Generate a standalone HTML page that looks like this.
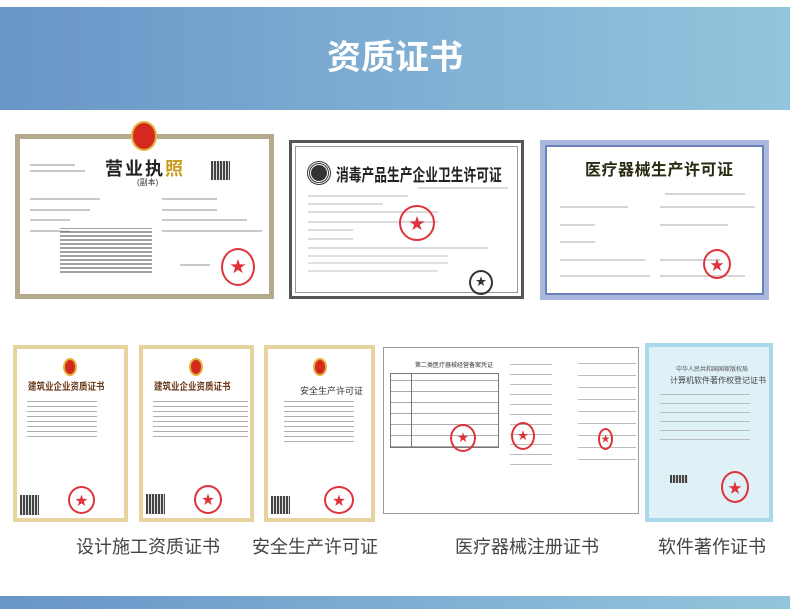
<!DOCTYPE html>
<html><head><meta charset="utf-8"><style>
*{margin:0;padding:0;box-sizing:border-box}
body{width:790px;height:609px;background:#fff;position:relative;overflow:hidden;font-family:"Liberation Sans","Noto Sans CJK SC",sans-serif}
.a{position:absolute}
.band{position:absolute;left:0;width:790px;background:linear-gradient(90deg,#6a95c8,#93c6dd)}
.t{position:absolute;font-size:18px;color:#444;top:533px;white-space:nowrap;font-family:"Noto Sans CJK SC",sans-serif}
.ln{position:absolute;height:2px;background:#888;opacity:.45}
.st{position:absolute;border-radius:50%;border:2px solid #e0323a;color:#e0323a;text-align:center;font-size:11px;line-height:1}
.qr{position:absolute;background:repeating-linear-gradient(90deg,#444 0 2px,#ddd 2px 3px)}
.em{position:absolute;border-radius:50%;background:#d42a1e;border:2px solid #e3b23c}
.h{position:absolute;font-weight:bold;white-space:nowrap;font-family:"Noto Sans CJK SC",sans-serif}
.tx{position:absolute;background:repeating-linear-gradient(0deg,#999 0 1px,#fff 1px 5px);opacity:.8}
</style></head><body>
<div class="band" style="top:7px;height:103px"></div>
<div class="a" style="top:30px;left:0;width:790px;text-align:center;font-size:34px;color:#fff;font-weight:bold;font-family:'Noto Sans CJK SC',sans-serif">资质证书</div>

<!-- cert1 -->
<div class="a" style="left:15px;top:134px;width:259px;height:165px;border:5px solid #b5a98c;background:#fff"></div>
<div class="em" style="left:131px;top:121px;width:26px;height:30px"></div>
<div class="h" style="left:105px;top:155px;font-size:18px;color:#222;letter-spacing:2px">营业执<span style="color:#c89a1e">照</span></div>
<div class="a" style="left:137px;top:177px;font-size:8px;color:#333">(副本)</div>
<div class="qr" style="left:211px;top:161px;width:19px;height:19px"></div>
<div class="ln" style="left:30px;top:164px;width:45px"></div>
<div class="ln" style="left:30px;top:170px;width:55px"></div>
<div class="ln" style="left:30px;top:198px;width:70px"></div>
<div class="ln" style="left:30px;top:209px;width:60px"></div>
<div class="ln" style="left:30px;top:219px;width:40px"></div>
<div class="ln" style="left:30px;top:230px;width:40px"></div>
<div class="ln" style="left:162px;top:198px;width:55px"></div>
<div class="ln" style="left:162px;top:209px;width:55px"></div>
<div class="ln" style="left:162px;top:219px;width:85px"></div>
<div class="ln" style="left:162px;top:230px;width:100px"></div>
<div class="a" style="left:60px;top:228px;width:92px;height:45px;background:repeating-linear-gradient(0deg,#555 0 2px,#fff 2px 4px);opacity:.55"></div>
<div class="ln" style="left:180px;top:264px;width:30px"></div>
<div class="st" style="left:221px;top:248px;width:34px;height:38px;font-size:16px;padding-top:10px">★</div>

<!-- cert2 -->
<div class="a" style="left:289px;top:140px;width:235px;height:159px;border:3px solid #555;background:#fff;box-shadow:inset 0 0 0 3px #fff,inset 0 0 0 4px #999"></div>
<div class="a" style="left:308px;top:162px;width:22px;height:22px;border-radius:50%;background:#333;border:3px double #fff;outline:1px solid #333"></div>
<div class="h" style="left:336px;top:161px;font-size:17px;color:#222;transform:scaleX(.75);transform-origin:left">消毒产品生产企业卫生许可证</div>
<div class="ln" style="left:418px;top:187px;width:90px;opacity:.3"></div>
<div class="ln" style="left:308px;top:195px;width:100px;opacity:.3"></div>
<div class="ln" style="left:308px;top:203px;width:75px;opacity:.3"></div>
<div class="ln" style="left:308px;top:211px;width:130px;opacity:.3"></div>
<div class="ln" style="left:308px;top:221px;width:130px;opacity:.3"></div>
<div class="ln" style="left:308px;top:229px;width:45px;opacity:.3"></div>
<div class="ln" style="left:308px;top:238px;width:45px;opacity:.3"></div>
<div class="ln" style="left:308px;top:247px;width:180px;opacity:.3"></div>
<div class="ln" style="left:308px;top:255px;width:140px;opacity:.25"></div>
<div class="ln" style="left:308px;top:262px;width:140px;opacity:.25"></div>
<div class="ln" style="left:308px;top:270px;width:130px;opacity:.25"></div>
<div class="st" style="left:399px;top:205px;width:36px;height:36px;font-size:16px;padding-top:10px">★</div>
<div class="st" style="left:469px;top:270px;width:24px;height:25px;border-color:#333;color:#333;padding-top:5px">★</div>

<!-- cert3 -->
<div class="a" style="left:540px;top:140px;width:229px;height:160px;border:5px solid #a9b8dd;background:#fff;box-shadow:inset 0 0 0 2px #6b81bd"></div>
<div class="h" style="left:585px;top:156px;font-size:16px;color:#2a2a10;letter-spacing:0.5px">医疗器械生产许可证</div>
<div class="ln" style="left:665px;top:193px;width:80px;opacity:.35"></div>
<div class="ln" style="left:560px;top:206px;width:68px;opacity:.35"></div>
<div class="ln" style="left:660px;top:206px;width:95px;opacity:.35"></div>
<div class="ln" style="left:560px;top:224px;width:35px;opacity:.35"></div>
<div class="ln" style="left:660px;top:224px;width:68px;opacity:.35"></div>
<div class="ln" style="left:560px;top:241px;width:35px;opacity:.35"></div>
<div class="ln" style="left:560px;top:259px;width:85px;opacity:.35"></div>
<div class="ln" style="left:660px;top:259px;width:60px;opacity:.35"></div>
<div class="ln" style="left:560px;top:275px;width:90px;opacity:.35"></div>
<div class="ln" style="left:660px;top:275px;width:85px;opacity:.35"></div>
<div class="st" style="left:703px;top:249px;width:28px;height:30px;font-size:14px;padding-top:7px">★</div>

<!-- row2 cert4 -->
<div class="a" style="left:13px;top:345px;width:115px;height:177px;border:4px solid #e6d39d;background:#fff"></div>
<div class="em" style="left:63px;top:358px;width:14px;height:18px"></div>
<div class="h" style="left:28px;top:378px;font-size:10px;color:#6b3a1a;transform:scaleX(.85);transform-origin:left">建筑业企业资质证书</div>
<div class="tx" style="left:27px;top:397px;width:70px;height:40px"></div>
<div class="qr" style="left:20px;top:495px;width:19px;height:20px"></div>
<div class="st" style="left:68px;top:486px;width:27px;height:28px;font-size:13px;padding-top:6px">★</div>
<!-- cert5 -->
<div class="a" style="left:139px;top:345px;width:115px;height:177px;border:4px solid #e6d39d;background:#fff"></div>
<div class="em" style="left:189px;top:358px;width:14px;height:18px"></div>
<div class="h" style="left:154px;top:378px;font-size:10px;color:#6b3a1a;transform:scaleX(.85);transform-origin:left">建筑业企业资质证书</div>
<div class="tx" style="left:153px;top:397px;width:95px;height:40px"></div>
<div class="qr" style="left:146px;top:494px;width:19px;height:20px"></div>
<div class="st" style="left:194px;top:485px;width:28px;height:29px;font-size:13px;padding-top:6px">★</div>
<!-- cert6 -->
<div class="a" style="left:264px;top:345px;width:111px;height:177px;border:4px solid #e6d39d;background:#fff"></div>
<div class="em" style="left:313px;top:358px;width:14px;height:18px"></div>
<div class="a" style="left:300px;top:384px;font-size:9px;color:#333;font-family:'Noto Sans CJK SC',sans-serif">安全生产许可证</div>
<div class="tx" style="left:284px;top:400px;width:70px;height:42px"></div>
<div class="qr" style="left:271px;top:496px;width:19px;height:18px"></div>
<div class="st" style="left:324px;top:486px;width:30px;height:28px;font-size:13px;padding-top:6px">★</div>
<!-- cert7 -->
<div class="a" style="left:383px;top:347px;width:256px;height:167px;border:1px solid #999;background:#fff"></div>
<div class="a" style="left:415px;top:360px;font-size:6px;color:#333">第二类医疗器械经营备案凭证</div>
<div class="a" style="left:390px;top:373px;width:109px;height:75px;border:1px solid #777;background:repeating-linear-gradient(0deg,#aaa 0 1px,#fff 1px 11px)"></div>
<div class="a" style="left:411px;top:373px;width:1px;height:75px;background:#777"></div>
<div class="a" style="left:510px;top:355px;width:42px;height:110px;background:repeating-linear-gradient(0deg,#bbb 0 1px,#fff 1px 10px)"></div>
<div class="a" style="left:578px;top:360px;width:58px;height:100px;background:repeating-linear-gradient(0deg,#bbb 0 1px,#fff 1px 12px)"></div>
<div class="st" style="left:450px;top:424px;width:26px;height:28px;padding-top:7px">★</div>
<div class="st" style="left:511px;top:422px;width:24px;height:28px;padding-top:7px">★</div>
<div class="st" style="left:598px;top:428px;width:15px;height:22px;font-size:9px;padding-top:5px">★</div>
<!-- cert8 -->
<div class="a" style="left:645px;top:343px;width:128px;height:179px;background:#dff0f7;border:4px solid #a8d9ea"></div>
<div class="a" style="left:676px;top:364px;font-size:6px;color:#555;font-family:'Noto Sans CJK SC',sans-serif">中华人民共和国国家版权局</div>
<div class="a" style="left:670px;top:375px;font-size:8px;color:#444;font-family:'Noto Sans CJK SC',sans-serif">计算机软件著作权登记证书</div>
<div class="a" style="left:660px;top:390px;width:90px;height:50px;background:repeating-linear-gradient(0deg,#bbb 0 1px,transparent 1px 9px)"></div>
<div class="qr" style="left:670px;top:475px;width:18px;height:8px"></div>
<div class="st" style="left:721px;top:471px;width:28px;height:32px;font-size:14px;padding-top:8px">★</div>

<div class="t" style="left:76px">设计施工资质证书</div>
<div class="t" style="left:252px">安全生产许可证</div>
<div class="t" style="left:455px">医疗器械注册证书</div>
<div class="t" style="left:658px">软件著作证书</div>

<div class="band" style="top:596px;height:13px"></div>
</body></html>
